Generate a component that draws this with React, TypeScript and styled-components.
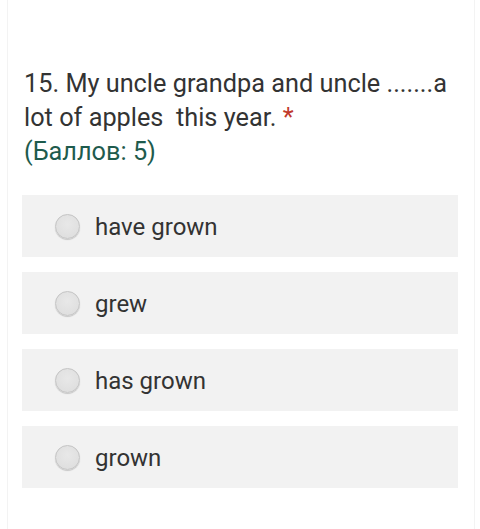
import React from "react";
import styled, { createGlobalStyle } from "styled-components";

const Global = createGlobalStyle`
  html, body { margin: 0; padding: 0; background: #ffffff; }
  body { font-family: Roboto, "Noto Sans", Arial, sans-serif; }
`;

const Page = styled.div`
  box-sizing: border-box;
  margin-left: 7px;
  width: 468px;
  min-height: 529px;
  border-left: 1px solid #f3f3f3;
  border-right: 1px solid #f3f3f3;
  padding: 67px 0 0 16px;
`;

const Question = styled.div`
  width: 436px;
  font-size: 25.3px;
  line-height: 34px;
  color: #333333;
  white-space: pre-wrap;
`;

const Title = styled.p`
  margin: 0;
`;

const Required = styled.span`
  color: #c0392b;
`;

const Points = styled.p`
  margin: 0;
  color: #1e5b4d;
`;

const Options = styled.div`
  display: flex;
  flex-direction: column;
  gap: 15px;
  margin-top: 26px;
  margin-left: -2px;
  width: 436px;
`;

const Option = styled.label`
  display: flex;
  align-items: center;
  gap: 15px;
  height: 62px;
  padding-left: 33px;
  background: #f2f2f2;
  cursor: pointer;
`;

const Radio = styled.span`
  box-sizing: border-box;
  width: 25px;
  height: 25px;
  border-radius: 50%;
  background: radial-gradient(circle at 50% 40%, #e8e8e8 0%, #dcdcdc 100%);
  border: 1px solid #c4c4c4;
  box-shadow: 0 1px 1px rgba(0, 0, 0, 0.18);
  flex-shrink: 0;
`;

const OptionText = styled.span`
  font-size: 24px;
  color: #333333;
  margin-top: 1px;
`;

const options = ["have grown", "grew", "has grown", "grown"];

export default function App() {
  return (
    <>
      <Global />
      <Page>
        <Question>
          <Title>
            {"15. My uncle grandpa and uncle .......a lot of apples  this year. "}
            <Required>*</Required>
          </Title>
          <Points>(Баллов: 5)</Points>
        </Question>
        <Options>
          {options.map((o) => (
            <Option key={o}>
              <Radio />
              <OptionText>{o}</OptionText>
            </Option>
          ))}
        </Options>
      </Page>
    </>
  );
}
